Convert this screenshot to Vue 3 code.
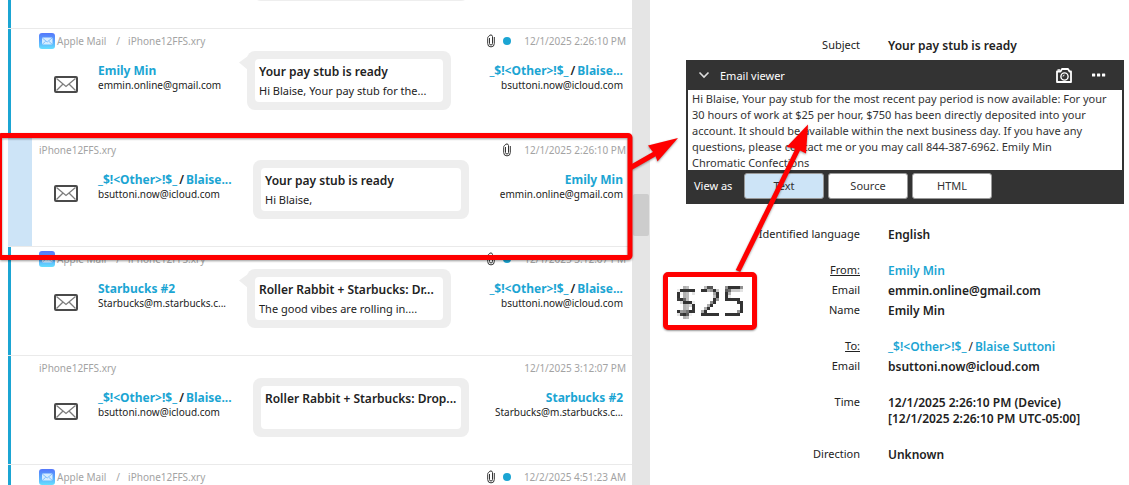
<script setup>
import { ref } from 'vue'

const other = '_$!<Other>!$_'
const mine = { names: [other, 'Blaise...'], email: 'bsuttoni.now@icloud.com' }
const emily = { names: ['Emily Min'], email: 'emmin.online@gmail.com' }
const starbucks = { names: ['Starbucks #2'], email: 'Starbucks@m.starbucks.c...' }

const messages = [
  { id: 1, kind: 'out', blank: true },
  { id: 2, kind: 'in', app: true, clip: true, unread: true, time: '12/1/2025 2:26:10 PM', from: emily, to: mine, subject: 'Your pay stub is ready', preview: 'Hi Blaise, Your pay stub for the...' },
  { id: 3, kind: 'out', clip: true, selected: true, time: '12/1/2025 2:26:10 PM', from: mine, to: emily, subject: 'Your pay stub is ready', preview: 'Hi Blaise,' },
  { id: 4, kind: 'in', app: true, clip: true, unread: true, time: '12/1/2025 3:12:07 PM', from: starbucks, to: mine, subject: 'Roller Rabbit + Starbucks: Dr...', preview: 'The good vibes are rolling in....' },
  { id: 5, kind: 'out', time: '12/1/2025 3:12:07 PM', from: mine, to: starbucks, subject: 'Roller Rabbit + Starbucks: Drop...', preview: '' },
  { id: 6, kind: 'in', app: true, clip: true, unread: true, time: '12/2/2025 4:51:23 AM' }
]

const body = `Hi Blaise, Your pay stub for the most recent pay period is now available: For your
30 hours of work at $25 per hour, $750 has been directly deposited into your
account. It should be available within the next business day. If you have any
questions, please contact me or you may call 844-387-6962. Emily Min
Chromatic Confections`

const modes = ['Text', 'Source', 'HTML']
const mode = ref('Text')
</script>

<template>
  <main class="app">
    <section class="list-pane">
      <ul class="messages">
        <li v-for="m in messages" :key="m.id" class="message" :class="[m.kind, { selected: m.selected }]">
          <div class="marker"></div>
          <div class="content">
            <div class="meta">
              <template v-if="!m.blank">
                <svg v-if="m.app" class="app-icon" viewBox="0 0 16 16" aria-hidden="true">
                  <defs>
                    <linearGradient :id="'g' + m.id" x1="0" y1="0" x2="0" y2="1">
                      <stop offset="0" stop-color="#5577fb" />
                      <stop offset="0.5" stop-color="#59a6fc" />
                      <stop offset="1" stop-color="#66e0ff" />
                    </linearGradient>
                  </defs>
                  <rect width="16" height="16" rx="3" :fill="`url(#g${m.id})`" />
                  <rect x="3" y="4.5" width="10.5" height="7" rx="1" fill="#d5ecff" />
                  <path d="M3.3 5l4.9 4 4.9-4M3.3 11.3l3.4-3M13.2 11.3l-3.4-3" fill="none" stroke="#6db4fb" stroke-width="0.8" />
                </svg>
                <span v-if="m.app" class="source">Apple Mail<span class="slash">/</span></span>
                <span>iPhone12FFS.xry</span>
                <span class="status">
                  <svg v-if="m.clip" class="clip" viewBox="0 0 8 14" aria-hidden="true">
                    <path d="M2.5 4v5.5a1.5 1.5 0 0 0 3 0V2.5a1.7 1.7 0 0 0-3.3-.4C1 2.5.7 3.3.7 4.3v5.3a3.3 3.3 0 0 0 6.6 0V3" fill="none" stroke="#333" stroke-width="1" />
                  </svg>
                  <span v-if="m.unread" class="dot"></span>
                  <time>{{ m.time }}</time>
                </span>
              </template>
            </div>
            <div class="row">
              <svg v-if="!m.blank" class="envelope" viewBox="0 0 24 17" aria-hidden="true">
                <rect x="1" y="1" width="22" height="15" rx="1" fill="#fff" stroke="#4a4a4a" stroke-width="2" />
                <path d="M2.5 2.5L12 10.5l9.5-8M2.5 14.5L9 8M21.5 14.5L15 8" fill="none" stroke="#7d7d7d" stroke-width="1.3" />
              </svg>
              <div v-else class="envelope"></div>
              <div class="party">
                <template v-if="m.from">
                  <div class="names"><template v-for="(n, i) in m.from.names" :key="n"><span v-if="i" class="sep">/</span><a href="#">{{ n }}</a></template></div>
                  <div class="address">{{ m.from.email }}</div>
                </template>
              </div>
              <div class="bubble">
                <svg v-if="m.kind === 'in'" class="tail" viewBox="0 0 9 14" aria-hidden="true"><path d="M9 0L0 6.5 9 14z" fill="#eee" /></svg>
                <div class="card">
                  <div class="subject">{{ m.subject }}</div>
                  <div class="preview">{{ m.preview }}</div>
                </div>
              </div>
              <div class="party recipient">
                <template v-if="m.to">
                  <div class="names"><template v-for="(n, i) in m.to.names" :key="n"><span v-if="i" class="sep">/</span><a href="#">{{ n }}</a></template></div>
                  <div class="address">{{ m.to.email }}</div>
                </template>
              </div>
            </div>
          </div>
        </li>
      </ul>
      <div class="scrollbar"><div class="thumb"></div></div>
    </section>

    <section class="detail">
      <dl class="fields">
        <dt>Subject</dt>
        <dd>Your pay stub is ready</dd>
      </dl>

      <article class="viewer">
        <header>
          <button class="icon-btn" aria-label="Collapse">
            <svg width="12" height="8" viewBox="0 0 12 8"><path d="M1.5 1.5L6 6l4.5-4.5" fill="none" stroke="#ddd" stroke-width="1.6" /></svg>
          </button>
          <h2>Email viewer</h2>
          <button class="icon-btn" aria-label="Take picture">
            <svg width="16" height="15" viewBox="0 0 16 15" fill="none" stroke="#fff">
              <path d="M1 3.5h3.5L6 1h6l1.5 2.5H15V14H1z" stroke-width="1.8" stroke-linejoin="round" />
              <path d="M1.5 2h2.5" stroke-width="1.5" />
              <circle cx="8.5" cy="8.5" r="3.6" stroke-width="1.4" />
              <path d="M7 8.5A1.5 1.5 0 0 1 8.5 7" stroke-width="1" />
            </svg>
          </button>
          <button class="icon-btn" aria-label="More">
            <svg width="14" height="4" viewBox="0 0 14 4" fill="#fff"><rect y="0.5" width="3.2" height="3" rx="0.6" /><rect x="5" y="0.5" width="3.2" height="3" rx="0.6" /><rect x="10" y="0.5" width="3.2" height="3" rx="0.6" /></svg>
          </button>
        </header>
        <p class="body">{{ body }}</p>
        <footer>
          <span class="view-as">View as</span>
          <button v-for="v in modes" :key="v" class="mode" :class="{ active: v === mode }" @click="mode = v">{{ v }}</button>
        </footer>
      </article>

      <dl class="fields">
        <dt>Identified language</dt>
        <dd>English</dd>
      </dl>
      <dl class="fields">
        <dt class="head">From:</dt>
        <dd><a href="#">Emily Min</a></dd>
        <dt>Email</dt>
        <dd>emmin.online@gmail.com</dd>
        <dt>Name</dt>
        <dd>Emily Min</dd>
      </dl>
      <dl class="fields">
        <dt class="head">To:</dt>
        <dd><a href="#">{{ other }}</a><span class="sep light">/</span><a href="#">Blaise Suttoni</a></dd>
        <dt>Email</dt>
        <dd>bsuttoni.now@icloud.com</dd>
      </dl>
      <dl class="fields">
        <dt>Time</dt>
        <dd>12/1/2025 2:26:10 PM (Device)<br />[12/1/2025 2:26:10 PM UTC-05:00]</dd>
      </dl>
      <dl class="fields">
        <dt>Direction</dt>
        <dd>Unknown</dd>
      </dl>
    </section>

    <svg class="callouts" width="1129" height="485" viewBox="0 0 1129 485" aria-hidden="true">
      <defs>
        <filter id="mosaic" x="0" y="0" width="1" height="1" color-interpolation-filters="sRGB">
          <feFlood x="1" y="1" width="1" height="1" flood-color="#000" />
          <feComposite width="3" height="3" />
          <feTile result="grid" />
          <feComposite in="SourceGraphic" in2="grid" operator="in" />
          <feMorphology operator="dilate" radius="1" />
        </filter>
      </defs>
      <g fill="none" stroke="#f00" stroke-width="5">
        <rect x="-0.5" y="135.5" width="630.5" height="122" rx="2" />
        <path d="M630 168l28-16M738 271l60-122" />
      </g>
      <g fill="#f00">
        <path d="M678 138l-20.5 23.5-2.5-7-4-5-3-4z" />
        <path d="M808 124.5l-2 29-6-3-7-2.500-6.500-1z" />
      </g>
    </svg>
    <div class="amount"><span>$25</span></div>
  </main>
</template>

<style>
body {
  margin: 0;
  background: #fff;
}
</style>

<style scoped>
.app {
  position: relative;
  display: grid;
  grid-template-columns: 650fr 479fr;
  height: 100vh;
  overflow: hidden;
  background: #fff;
  color: #222;
  font-family: "Noto Sans", "Open Sans", sans-serif;
  font-size: 11px;
  line-height: 16px;
}
a {
  color: #1ba5d3;
  font-weight: 700;
  text-decoration: none;
}
.list-pane {
  display: flex;
  min-width: 0;
  overflow: hidden;
}
.messages {
  flex: 1;
  min-width: 0;
  margin: -81px 0 0;
  padding: 0 0 0 8px;
  list-style: none;
}
.message {
  display: flex;
  min-height: 108px;
  border-top: 1px solid #eaeaea;
}
.marker {
  flex: none;
  width: 3px;
  margin-right: 21px;
  background: #1ba5d3;
}
.selected .marker {
  width: 24px;
  margin-right: 0;
  background: #cde4f7;
}
.content {
  flex: 1;
  min-width: 0;
}
.meta {
  display: flex;
  align-items: center;
  height: 16px;
  padding: 4px 6px 2px 7px;
  color: #a3a3a3;
  font-size: 10px;
}
.app-icon {
  width: 16px;
  height: 16px;
  margin-right: 2px;
}
.slash {
  margin: 0 8px 0 10px;
}
.status {
  display: flex;
  align-items: center;
  gap: 8px;
  margin-left: auto;
}
.status time {
  min-width: 107px;
  text-align: right;
}
.clip {
  width: 8px;
  height: 14px;
}
.dot {
  width: 8px;
  height: 8px;
  border-radius: 50%;
  background: #1ba5d3;
}
.row {
  display: flex;
  align-items: flex-start;
  padding: 0 9px 0 22px;
}
.envelope {
  flex: none;
  width: 24px;
  height: 17px;
  margin: 25px 20px 0 0;
}
.party {
  width: 149px;
  padding-top: 13px;
  white-space: nowrap;
}
.out .party {
  width: 155px;
}
.recipient,
.out .recipient {
  flex: 1;
  width: auto;
  min-width: 0;
  text-align: right;
}
.names {
  font-size: 12px;
  line-height: 14px;
}
.address {
  font-size: 10px;
  line-height: 15px;
}
.sep {
  margin: 0 2px;
  font-weight: 600;
}
.light {
  font-weight: 400;
}
.bubble {
  position: relative;
  flex: none;
  box-sizing: border-box;
  width: 204px;
  padding: 8px;
  border-radius: 8px;
  background: #eee;
}
.out .bubble {
  width: 216px;
}
.tail {
  position: absolute;
  top: 5px;
  left: -8px;
  width: 9px;
  height: 14px;
}
.card {
  height: 40px;
  padding: 3px 0 0 4px;
  border-radius: 4px;
  background: #fff;
  line-height: 19px;
  white-space: nowrap;
}
.subject {
  height: 19px;
  font-size: 12px;
  font-weight: 600;
}
.scrollbar {
  flex: none;
  width: 18px;
  background: #e5e5e5;
}
.thumb {
  height: 42px;
  margin: 194px 1px 0;
  border-radius: 2px;
  background: #cdcdcd;
}
.detail {
  min-width: 0;
  padding: 35px 5px 0 36px;
}
.fields {
  display: grid;
  grid-template-columns: 174px 1fr;
  column-gap: 28px;
  margin: 0 0 16px;
}
.fields dt {
  padding: 2px 0;
  text-align: right;
}
.fields dd {
  margin: 0;
  padding: 3px 0 1px;
  font-size: 12px;
  font-weight: 600;
}
.fields a {
  font-weight: 600;
}
.fields .head {
  text-decoration: underline;
}
.viewer {
  margin: -11px 0 20px;
  padding: 0 2px;
  background: #333;
  color: #fff;
}
.viewer header {
  display: flex;
  align-items: center;
  height: 30px;
  padding: 0 16px 0 10px;
}
.viewer h2 {
  flex: 1;
  margin: 2px 0 0 10px;
  font-size: 11px;
  font-weight: 400;
  line-height: 16px;
}
.icon-btn {
  display: flex;
  margin: 0;
  padding: 0;
  border: 0;
  background: none;
}
.icon-btn + .icon-btn {
  margin-left: 20px;
}
.body {
  margin: 0;
  padding: 1px 0 0 4px;
  height: 79px;
  overflow: hidden;
  background: #fff;
  color: #333;
  white-space: pre;
}
.viewer footer {
  display: flex;
  align-items: center;
  gap: 4px;
  padding: 3px 0 5px 6px;
}
.view-as {
  width: 46px;
}
.mode {
  width: 80px;
  height: 26px;
  padding: 0;
  border: 1px solid #999;
  border-radius: 3px;
  background: #fff;
  color: #333;
  font: inherit;
}
.mode.active {
  background: #cde4f7;
}
.callouts {
  position: absolute;
  top: 0;
  left: 0;
  pointer-events: none;
  filter: drop-shadow(0 1px 1px rgba(0, 0, 0, 0.4));
}
.amount {
  position: absolute;
  top: 272px;
  left: 663px;
  box-sizing: border-box;
  width: 94px;
  height: 58px;
  border: 5px solid #f00;
  border-radius: 5px;
  background: #fff;
  box-shadow: 0 1px 2px rgba(0, 0, 0, 0.4);
  color: #333;
  font-size: 42px;
  line-height: 48px;
  text-align: center;
}
.amount span {
  display: block;
  filter: url(#mosaic);
}
</style>
